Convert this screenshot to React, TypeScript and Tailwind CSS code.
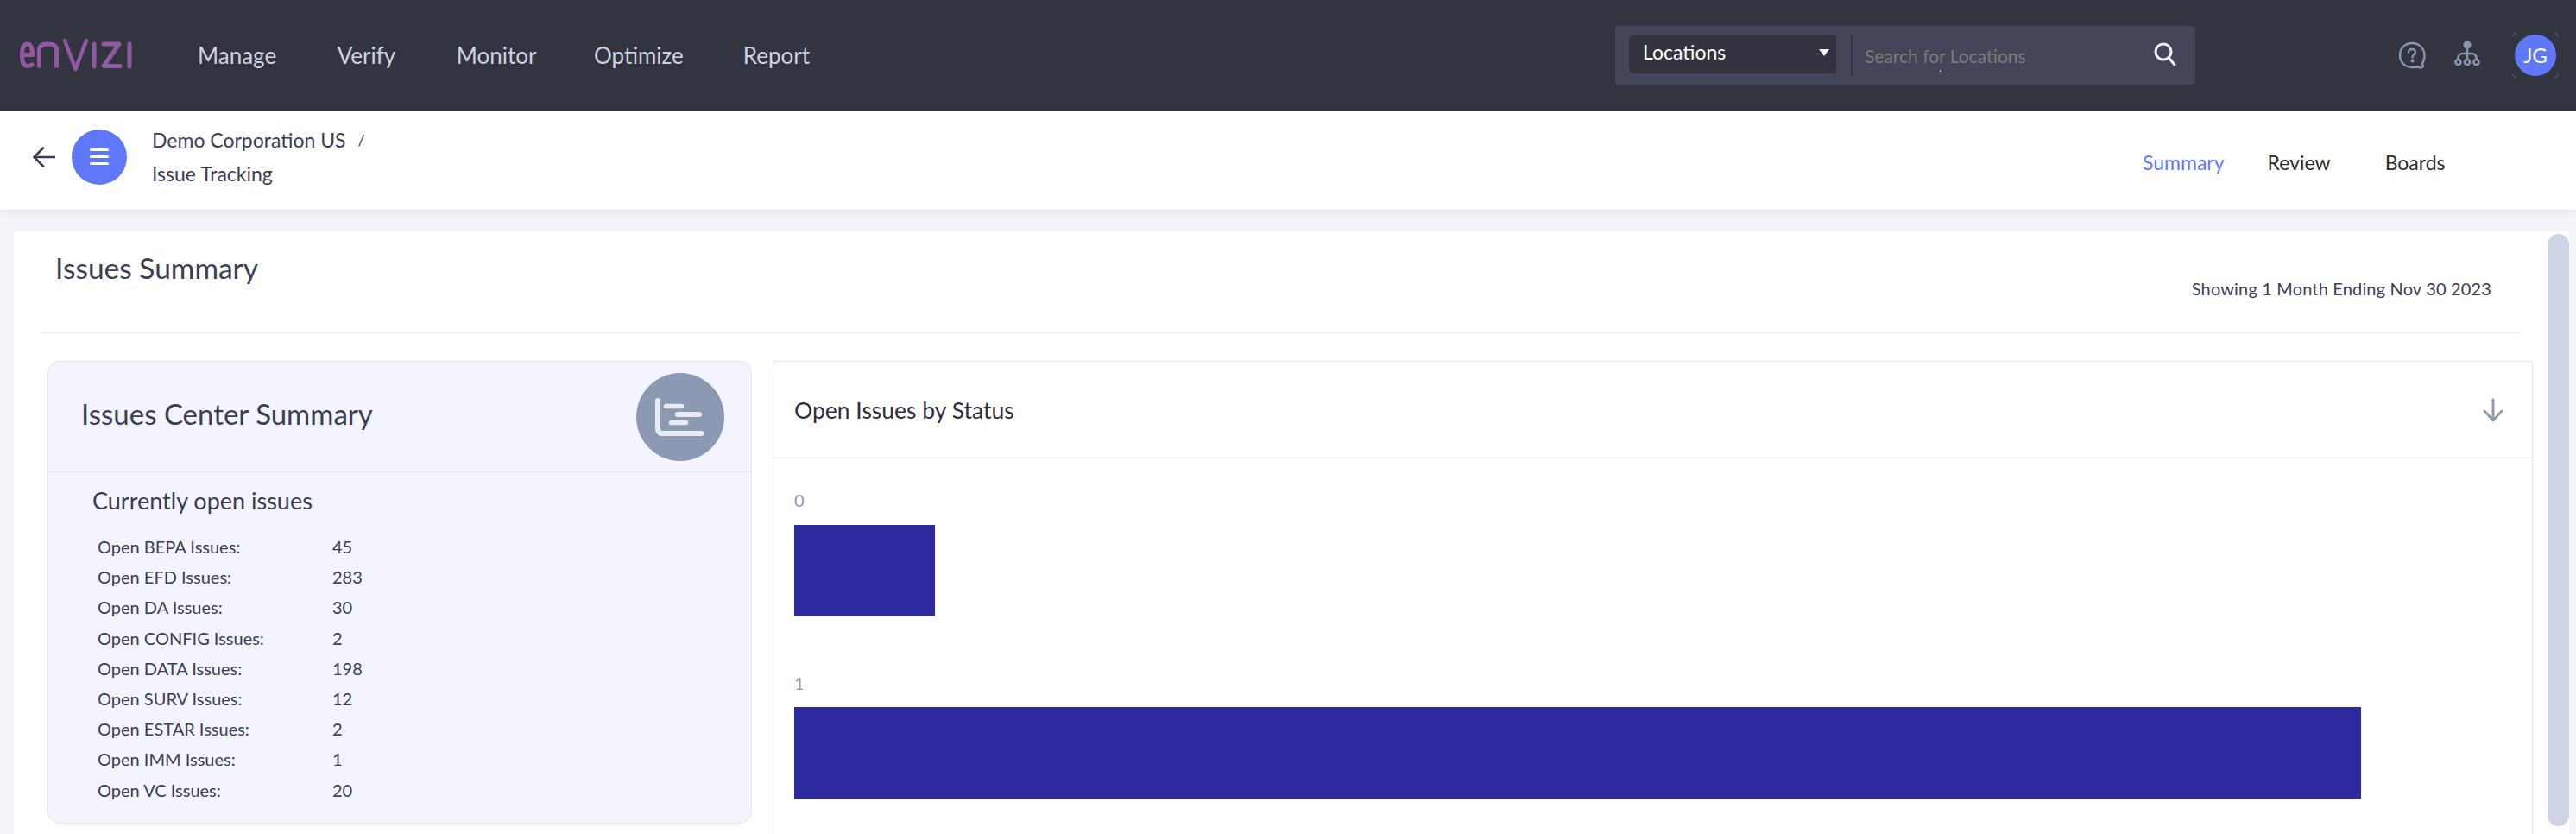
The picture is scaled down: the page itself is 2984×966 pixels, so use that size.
import React from "react";

const NAV = ["Manage", "Verify", "Monitor", "Optimize", "Report"];
const NAV_GAPS = ["mr-[70.5px]", "mr-[70.5px]", "mr-[66.5px]", "mr-[69px]", ""];
const ISSUES: [string, string][] = [
  ["Open BEPA Issues:", "45"],
  ["Open EFD Issues:", "283"],
  ["Open DA Issues:", "30"],
  ["Open CONFIG Issues:", "2"],
  ["Open DATA Issues:", "198"],
  ["Open SURV Issues:", "12"],
  ["Open ESTAR Issues:", "2"],
  ["Open IMM Issues:", "1"],
  ["Open VC Issues:", "20"],
];

function Logo() {
  return (
    <svg width="132" height="40" viewBox="0 0 132 40" fill="none" stroke="#9059a1" strokeWidth="5" strokeLinecap="round" strokeLinejoin="round">
      <path d="M3.5 19.5H15.5C15.5 11 13 7 9.5 7C5.5 7 3.5 12 3.5 20C3.5 28 6 32.5 10 32.5C12 32.5 13.5 32 15 31" />
      <path d="M23.5 32.5V14C23.5 9 27 7 33.5 7C40 7 43.5 9 43.5 14V32.5" />
      <path d="M53 3L65.5 36L78 3" strokeWidth="4.5" />
      <path d="M87 7V33" />
      <path d="M98 7H116L98 32.5H117" />
      <path d="M128 7V33" />
    </svg>
  );
}

function HelpIcon() {
  return (
    <svg width="32" height="32" viewBox="0 0 32 32" fill="none" stroke="#8b95ae" strokeWidth="2.4" strokeLinecap="round">
      <path d="M16 2C8 2 2 8 2 16C2 24 8 30 16 30C20 30 22 29.5 24 29.5C25 31 28 31 29 29C29.5 28 28.5 27 27.5 26C29.5 23.5 30.5 20 30.5 16C30.5 8 24 2 16 2Z" />
      <path d="M12 12.5C12 10 14 9 16 9C18.5 9 20 10.5 20 12.5C20 15 16.5 15.5 16.5 18.5" />
      <circle cx="16.5" cy="22.5" r="0.8" fill="#8b95ae" />
    </svg>
  );
}

function TreeIcon() {
  return (
    <svg width="30" height="30" viewBox="0 0 30 30" fill="none" stroke="#8b95ae" strokeWidth="2.6">
      <circle cx="15" cy="5" r="4.5" fill="#8b95ae" stroke="none" />
      <path d="M15 8V23" />
      <path d="M4.5 22V20C4.5 17 7 15 10 15H20C23 15 25.5 17 25.5 20V22" />
      <circle cx="4.5" cy="25" r="3" />
      <circle cx="15" cy="25" r="3" />
      <circle cx="25.5" cy="25" r="3" />
    </svg>
  );
}

function ChartIcon() {
  return (
    <svg width="60" height="48" viewBox="0 0 60 48" fill="none" stroke="#e8ebf3" strokeLinecap="round">
      <path d="M4 5V37C4 41 6 43 10 43H55" strokeWidth="6" />
      <path d="M13.5 11.5H31.5" strokeWidth="5.5" />
      <path d="M27 21H52" strokeWidth="6" />
      <path d="M19.5 30.5H36.5" strokeWidth="5.5" />
    </svg>
  );
}

function Avatar() {
  return (
    <div className="w-[48px] h-[48px] rounded-full bg-[#5f78fa] text-white text-[24px] flex items-center justify-center shrink-0 relative">
      JG
      <svg className="absolute left-[-3px] top-[-3px]" width="54" height="54" viewBox="0 0 54 54" fill="none" stroke="#6b6e7c" strokeWidth="1">
        <path d="M1 5C1 3 3 1 5 1" />
        <path d="M49 1C51 1 53 3 53 5" />
        <path d="M1 49C1 51 3 53 5 53" />
        <path d="M49 53C51 53 53 51 53 49" />
      </svg>
    </div>
  );
}

export default function App() {
  return (
    <div className="w-[2984px] h-[966px] overflow-hidden flex flex-col bg-[#f4f5f8] text-[#3b3e52] font-['Lato','Liberation_Sans',sans-serif]">
      <header className="h-[128px] shrink-0 bg-[#32343f] flex items-center">
        <div className="ml-[22px] mr-[75px] flex items-center"><Logo /></div>
        <nav className="flex items-center w-[1642px] text-[26px] text-[#cdd1e0] mt-[1px]">
          {NAV.map((n, i) => (
            <span key={n} className={NAV_GAPS[i]}>{n}</span>
          ))}
        </nav>
        <div className="w-[672px] h-[68px] bg-[#434659] rounded-tr-[6px] rounded-br-[6px] flex items-start pl-[16px] pt-[10px] relative">
          <div className="w-[240px] h-[45px] bg-[#32333f] rounded-bl-[6px] rounded-tl-[6px] flex items-center justify-between pl-[16px] pr-[8px] text-white text-[23px]">
            <span className="mt-[-4px]">Locations</span>
            <span className="w-0 h-0 border-l-[6px] border-r-[6px] border-t-[8px] border-l-transparent border-r-transparent border-t-white mt-[-3px]" />
          </div>
          <div className="w-[2px] h-[48px] bg-[#32333f] ml-[17px]" />
          <span className="ml-[14px] mt-[9px] w-[334px] text-[21px] text-[#7a7a80]">Search for Locations</span>
          <svg className="mt-[9px]" width="28" height="28" viewBox="0 0 28 28" fill="none" stroke="#eef0f5" strokeWidth="3" strokeLinecap="round">
            <circle cx="12" cy="11" r="9" />
            <path d="M18.5 18L25 26" />
          </svg>
          <span className="absolute left-[376px] top-[51px] w-[2px] h-[2px] bg-[#b9bbc6]" />
        </div>
        <div className="ml-[235px] flex items-center w-[181px]">
          <div className="mr-[33px]"><HelpIcon /></div>
          <div className="mr-[40px] mt-[-4px]"><TreeIcon /></div>
          <Avatar />
        </div>
      </header>

      <div className="h-[115px] shrink-0 bg-white shadow-[0_2px_10px_rgba(60,70,100,0.08)] flex items-center pb-[8px]">
        <svg className="ml-[38px]" width="26" height="24" viewBox="0 0 26 24" fill="none" stroke="#3b3e52" strokeWidth="2.6" strokeLinecap="round" strokeLinejoin="round">
          <path d="M25 12H2" />
          <path d="M12 1.5L1.5 12L12 22.5" />
        </svg>
        <div className="ml-[19px] w-[64px] h-[64px] rounded-full bg-[#5f78fa] flex flex-col items-center justify-center gap-[5px]">
          <span className="w-[22px] h-[3px] bg-white rounded-full" />
          <span className="w-[22px] h-[3px] bg-white rounded-full" />
          <span className="w-[22px] h-[3px] bg-white rounded-full" />
        </div>
        <div className="ml-[29px] flex flex-col gap-[11px] text-[23px] leading-[28px] mt-[0px] w-[2306px]">
          <div>Demo Corporation US <span className="ml-[8px] text-[18px] align-top">/</span></div>
          <div>Issue Tracking</div>
        </div>
        <div className="flex items-center text-[23px] text-[#2d2d2f] mt-[14px]">
          <span className="text-[#5f78fa] mr-[50px]">Summary</span>
          <span className="mr-[63px]">Review</span>
          <span>Boards</span>
        </div>
      </div>

      <div className="flex-1 min-h-0 flex pl-[16px] pr-[8px] pt-[25px]">
        <main className="flex-1 min-w-0 bg-white flex">
          <div className="flex-1 min-w-0 pl-[32px]">
            <div className="h-[118px] mr-[32px] border-b-[2px] border-[#e8ebf6] relative">
              <h1 className="pl-[16px] pt-[22px] text-[33.5px] leading-[40px] font-normal">Issues Summary</h1>
              <div className="absolute right-[33px] top-[54px] text-[20px] leading-[24px] tracking-[0.16px]">Showing 1 Month Ending Nov 30 2023</div>
            </div>
            <div className="flex pl-[7px] pr-[17px] pt-[32px] gap-[24px]">
              <section className="w-[816px] h-[536px] shrink-0 bg-[#f3f4fd] border border-[#e1e5f2] rounded-[14px] flex flex-col">
                <div className="h-[128px] shrink-0 border-b border-[#e1e5f2] flex items-center justify-between pl-[38px] pr-[31px]">
                  <h2 className="text-[33px] font-normal mt-[-6px]">Issues Center Summary</h2>
                  <div className="w-[102px] h-[102px] rounded-full bg-[#8d99b3] flex items-center justify-center">
                    <ChartIcon />
                  </div>
                </div>
                <div className="pl-[51px] pt-[17px]">
                  <h3 className="text-[27px] leading-[32px] font-normal mb-[20px]">Currently open issues</h3>
                  <div className="pl-[6px] flex flex-col text-[20px] leading-[35.2px]">
                    {ISSUES.map(([k, v]) => (
                      <div key={k} className="flex">
                        <span className="w-[272px]">{k}</span>
                        <span>{v}</span>
                      </div>
                    ))}
                  </div>
                </div>
              </section>
              <section className="flex-1 min-w-0 h-[600px] border border-[#e1e5f2] rounded-[4px]">
                <div className="h-[112px] border-b border-[#e1e5f2] flex items-center justify-between pl-[24px] pr-[33px]">
                  <h2 className="text-[26.5px] text-[#2d2f3d] font-normal mt-[3px]">Open Issues by Status</h2>
                  <svg width="24" height="28" viewBox="0 0 24 28" fill="none" stroke="#8d99b3" strokeWidth="2.8" strokeLinecap="round" strokeLinejoin="round">
                    <path d="M12 2V26" />
                    <path d="M2 15L12 26L22 15" />
                  </svg>
                </div>
                <div className="pl-[24px] pt-[36px]">
                  <div className="text-[20px] leading-[24px] text-[#8d99b3]">0</div>
                  <div className="w-[163px] h-[105px] mt-[17px] bg-[#2e289e]" />
                  <div className="text-[20px] leading-[24px] text-[#8d99b3] mt-[66px]">1</div>
                  <div className="w-[1815px] h-[106px] mt-[16px] bg-[#2e289e]" />
                </div>
              </section>
            </div>
          </div>
          <div className="w-[25px] shrink-0 h-[686px] mt-[3px] rounded-full bg-[#ced4e3]" />
        </main>
      </div>
    </div>
  );
}
